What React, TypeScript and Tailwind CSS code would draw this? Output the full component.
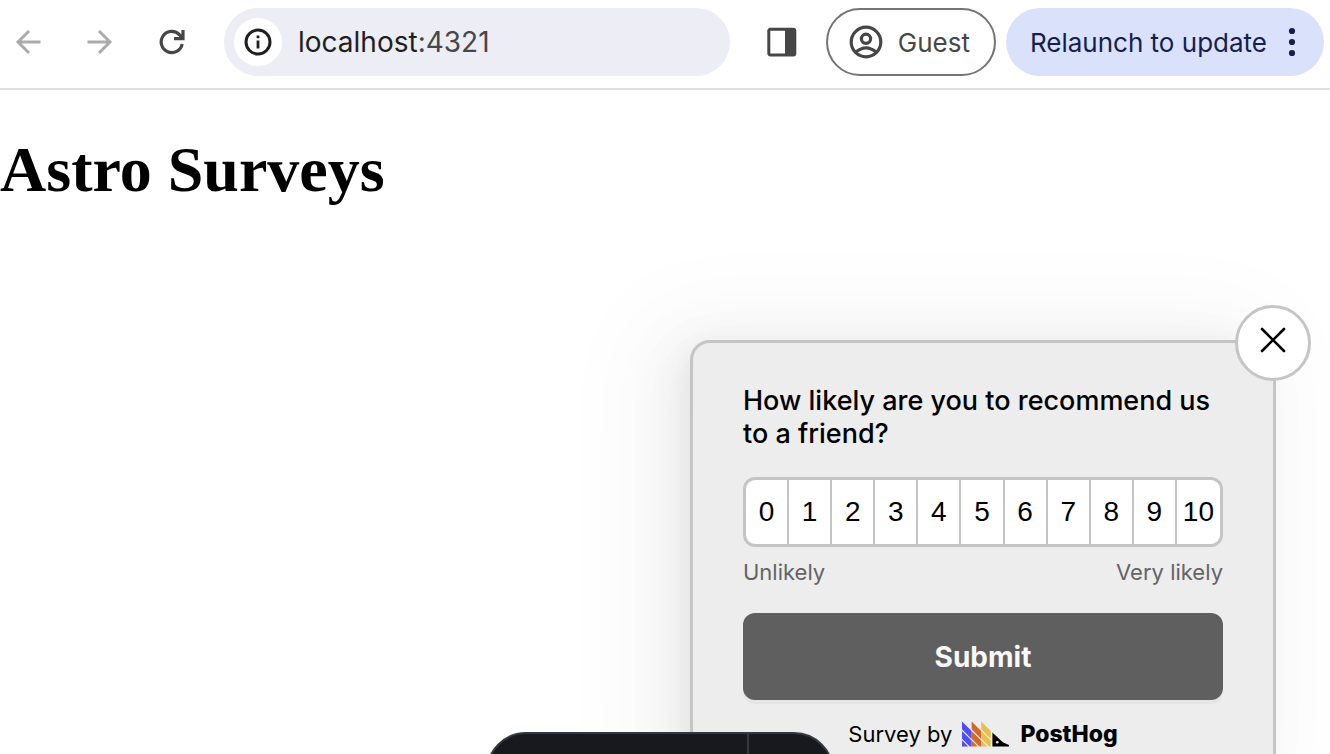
import { useState } from "react";

const scores = [0, 1, 2, 3, 4, 5, 6, 7, 8, 9, 10];

function Arrow({ flip = false }: { flip?: boolean }) {
  return (
    <svg viewBox="0 0 32 32" className="size-8" fill="none" stroke="#ababab" strokeWidth="3" aria-hidden="true">
      <path d={flip ? "M3.5 16H26M15 5L26 16L15 27" : "M28.5 16H6M17 5L6 16L17 27"} />
    </svg>
  );
}

function PostHogMark() {
  return (
    <svg viewBox="0 0 48 26" className="h-[26px] w-12" aria-hidden="true">
      <path fill="#4b4ff5" d="M0 .5L9.6 10.1V17.9L0 8.3zM0 9.9L9.6 19.5V25.5H7.8L0 17.7zM0 19.3L6.2 25.5H0z" />
      <path fill="#cf6a2c" d="M9.6 .5L19.2 10.1V17.9L9.6 8.3zM9.6 9.9L19.2 19.5V25.5H17.4L9.6 17.7zM9.6 19.3L15.8 25.5H9.6z" />
      <path fill="#e5c24f" d="M19.2 .5L28.8 10.1V17.9L19.2 8.3zM19.2 9.9L28.8 19.5V25.5H27L19.2 17.7zM19.2 19.3L25.4 25.5H19.2z" />
      <path fill="#000" d="M30.4 11.5L40 20.6Q41 21.8 43.5 22.4L47 24V25.5H30.4z" />
      <circle cx="35.2" cy="21.2" r="1.3" fill="#ededed" />
    </svg>
  );
}

function BrowserBar() {
  return (
    <header className="flex h-[90px] items-center border-b-2 border-[#e1e1e1] bg-white pr-1.5 pb-1 pl-3">
      <nav className="flex gap-10" aria-label="Browser">
        <button type="button" aria-label="Back"><Arrow /></button>
        <button type="button" aria-label="Forward"><Arrow flip /></button>
        <button type="button" aria-label="Reload">
          <svg viewBox="0 0 32 32" className="size-8" fill="none" stroke="#464646" strokeWidth="3.2" aria-hidden="true">
            <path d="M26.2 18A10.6 10.6 0 1 1 23.6 8.8L26 11.2" />
            <path d="M27 4V12.7H18" />
            <path d="M22 12L26 8V12z" fill="#464646" stroke="none" />
          </svg>
        </button>
      </nav>
      <div className="ml-9 flex h-[68px] min-w-0 flex-1 items-center gap-4 rounded-full bg-[#ededf6] pl-2.5">
        <button type="button" aria-label="View site information" className="flex size-12 shrink-0 items-center justify-center rounded-full bg-white">
          <svg viewBox="0 0 28 28" className="size-7" fill="none" stroke="#1f1f1f" aria-hidden="true">
            <circle cx="14" cy="14" r="12" strokeWidth="3" />
            <path d="M14 12.5V20.5M14 7.5V10.3" strokeWidth="2.8" />
          </svg>
        </button>
        <span className="text-[28px] text-[#1f1f1f]">
          localhost<span className="text-[#474747]">:4321</span>
        </span>
      </div>
      <button type="button" aria-label="Side panel" className="ml-9">
        <svg viewBox="0 0 32 32" className="size-8" aria-hidden="true">
          <rect x="2.8" y="3.3" width="26" height="25.6" rx="1.5" fill="none" stroke="#464646" strokeWidth="3" />
          <path fill="#464646" d="M19 3H29V29H19z" />
        </svg>
      </button>
      <button type="button" className="ml-7 flex h-[68px] items-center gap-3.5 rounded-full border-2 border-[#747474] pr-6 pl-5 text-[26px] text-[#474747]">
        <svg viewBox="0 0 36 36" className="size-9" fill="none" stroke="#464646" strokeWidth="3.2" aria-hidden="true">
          <circle cx="18" cy="18" r="14.8" />
          <circle cx="18" cy="14.8" r="4.6" />
          <path d="M8 28Q18 19.6 28 28" />
        </svg>
        Guest
      </button>
      <button type="button" className="ml-2.5 flex h-[68px] items-center gap-[9px] rounded-full bg-[#dae1fb] pr-4 pl-6 text-[26px] text-[#151e4d]">
        Relaunch to update
        <svg viewBox="0 0 32 32" className="size-8" fill="#151e4d" aria-hidden="true">
          <circle cx="16" cy="5" r="3.1" />
          <circle cx="16" cy="16" r="3.1" />
          <circle cx="16" cy="27" r="3.1" />
        </svg>
      </button>
    </header>
  );
}

function Survey() {
  const [score, setScore] = useState<number | null>(null);
  return (
    <form
      className="absolute top-[340px] right-[54px] w-[586px] rounded-[20px] border-[3px] border-[#c5c5c5] bg-[#ededed] px-[50px] pt-[41px] pb-10 shadow-[-12px_0_32px_-16px_rgba(0,0,0,0.08),-18px_0_56px_0_rgba(0,0,0,0.05),-24px_0_96px_32px_rgba(0,0,0,0.03)]"
      onSubmit={(e) => e.preventDefault()}
    >
      <button type="button" aria-label="Close survey" className="absolute -top-[38px] -right-[38px] flex size-[76px] items-center justify-center rounded-full border-[3px] border-[#c5c5c5] bg-white pb-1.5">
        <svg viewBox="0 0 28 28" className="size-7" fill="none" stroke="#000" strokeWidth="2.6" strokeLinecap="round" aria-hidden="true">
          <path d="M3 3L25 25M25 3L3 25" />
        </svg>
      </button>
      <h2 className="text-[27px] leading-[33px] font-medium text-black">How likely are you to recommend us to a friend?</h2>
      <div className="mt-[27px] grid h-[70px] grid-cols-11 divide-x-2 divide-[#c5c5c5] overflow-hidden rounded-xl border-[3px] border-[#c5c5c5] bg-white">
        {scores.map((n) => (
          <button
            key={n}
            type="button"
            aria-pressed={score === n}
            onClick={() => setScore(n)}
            className="min-w-0 font-['Liberation_Sans',Arial,sans-serif] text-[28px] text-black"
          >
            {n}
          </button>
        ))}
      </div>
      <div className="mt-[9px] flex justify-between text-[22px] leading-8 text-[#646464]">
        <span>Unlikely</span>
        <span>Very likely</span>
      </div>
      <button type="submit" className="mt-[25px] block h-[87px] w-full rounded-xl bg-[#5f5f5f] text-[28px] font-bold text-[#f8f8f8] shadow-[0_4px_0_rgba(0,0,0,0.03)]">
        Submit
      </button>
      <a href="https://posthog.com" className="mt-[18px] flex items-center justify-center gap-2.5 text-[22px] leading-8 text-black">
        Survey by
        <span className="flex items-center gap-2.5 text-[23px] font-extrabold">
          <PostHogMark />
          PostHog
        </span>
      </a>
    </form>
  );
}

export default function App() {
  return (
    <div className="relative h-screen overflow-hidden bg-white font-[Inter,sans-serif]">
      <BrowserBar />
      <main className="pt-11">
        <h1 className="font-['Liberation_Serif','Times_New_Roman',serif] text-[64px] leading-[72px] font-bold text-black">Astro Surveys</h1>
        <Survey />
      </main>
      <div className="absolute top-[732px] left-1/2 flex h-20 w-[348px] -translate-x-[179px] rounded-[44px] border-2 border-[#343841] bg-[#17191e]">
        <div className="flex-1 border-r-2 border-[#343841]" />
        <div className="w-[83px]" />
      </div>
    </div>
  );
}
